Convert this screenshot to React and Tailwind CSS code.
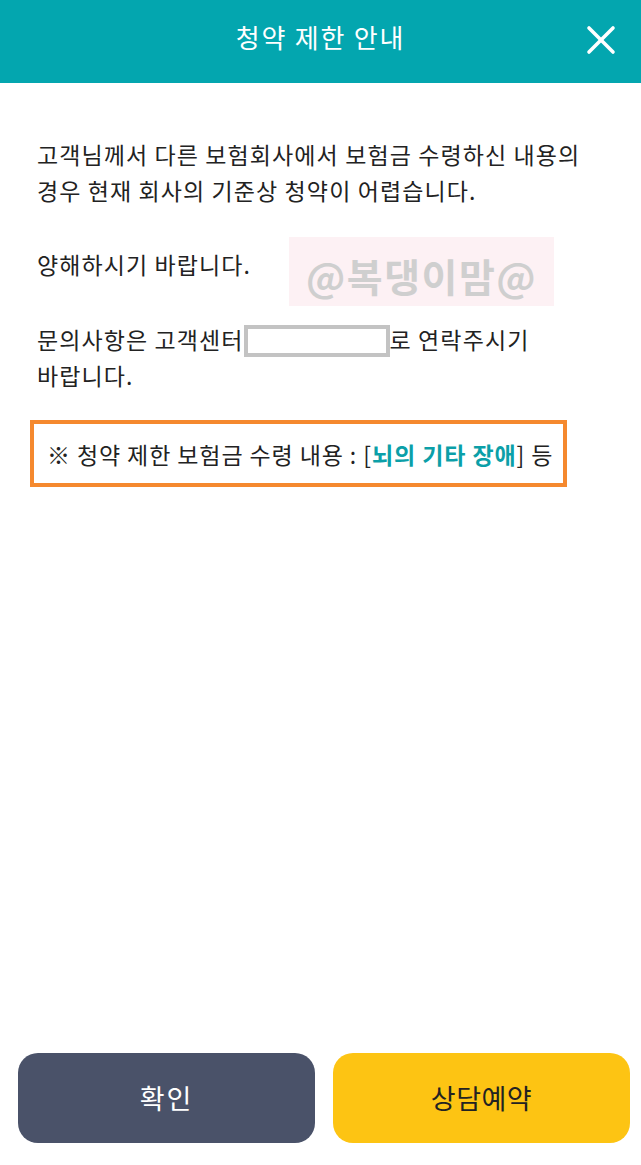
import React from 'react';

const App = () => {
  return (
    <div
      className="bg-white text-[#222] h-[1165px] flex flex-col"
      style={{ fontFamily: '"Noto Sans CJK KR", "Noto Sans", sans-serif' }}
    >
      {/* Header */}
      <div className="h-[83px] shrink-0 bg-[#03a6af] flex items-center justify-center relative">
        <span className="text-white text-[26px] tracking-[1.8px] -mt-[10px]">청약 제한 안내</span>
        <button className="absolute right-[24px] top-[24px] text-white">
          <svg width="32" height="32" viewBox="0 0 32 32" fill="none" stroke="currentColor" strokeWidth="3.6" strokeLinecap="round">
            <path d="M4 4 L28 28" />
            <path d="M28 4 L4 28" />
          </svg>
        </button>
      </div>

      {/* Body */}
      <div className="flex-1 px-[37px] pt-[53px] text-[23px] leading-[36px] tracking-[1.1px]">
        <p>
          고객님께서 다른 보험회사에서 보험금 수령하신 내용의
          <br />
          경우 현재 회사의 기준상 청약이 어렵습니다.
        </p>

        <div className="flex items-center mt-[29px]">
          <span className="mb-[15px]">양해하시기 바랍니다.</span>
          <div className="ml-[38px] w-[265px] h-[69px] bg-[#fdf1f4] flex items-center justify-center">
            <span className="text-[#cfcfcf] text-[39px] font-bold tracking-[1.5px] mt-[6px]">@복댕이맘@</span>
          </div>
        </div>

        <p className="mt-[15px]">
          문의사항은 고객센터
          <span className="inline-block align-middle w-[146px] h-[32px] border-[4px] border-[#c3c3c3] -mt-[4px]"></span>
          로 연락주시기
          <br />
          바랍니다.
        </p>

        <div className="mt-[27px] -ml-[7px] w-fit h-[67px] border-[4px] border-[#f5892e] flex items-center pl-[13px] pr-[10px] tracking-[0.9px]">
          <span>
            ※ 청약 제한 보험금 수령 내용 : [<span className="font-bold text-[#0b9fa8]">뇌의 기타 장애</span>] 등
          </span>
        </div>
      </div>

      {/* Footer buttons */}
      <div className="shrink-0 flex gap-[18px] pl-[18px] pr-[11px] pb-[22px]">
        <button className="flex-1 h-[90px] rounded-[20px] bg-[#4a5269] text-white text-[27px] tracking-[2px] flex items-center justify-center">
          확인
        </button>
        <button className="flex-1 h-[90px] rounded-[20px] bg-[#fdc413] text-[#222] text-[27px] tracking-[0.5px] flex items-center justify-center">
          상담예약
        </button>
      </div>
    </div>
  );
};

export default App;
